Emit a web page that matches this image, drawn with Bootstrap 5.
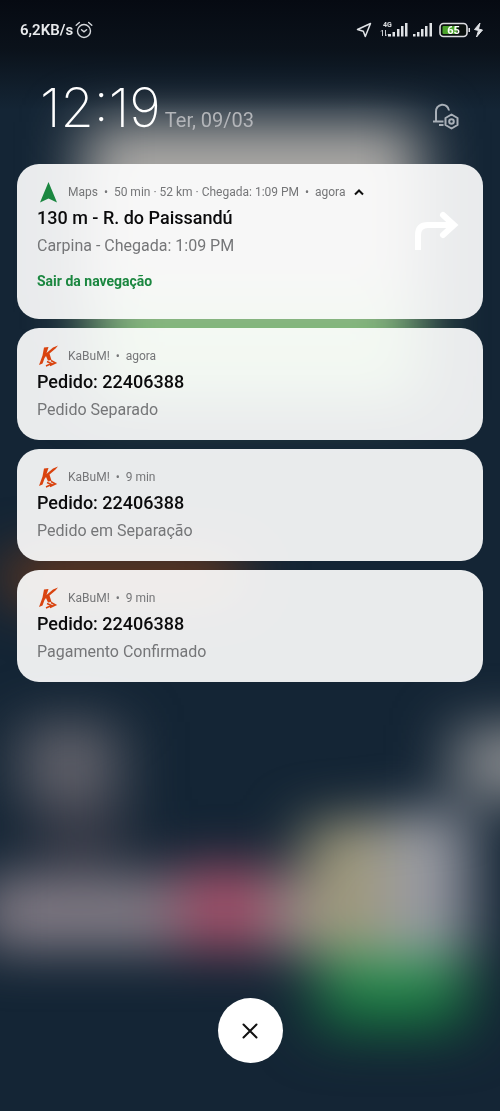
<!DOCTYPE html>
<html lang="pt-BR">
<head>
<meta charset="utf-8">
<meta name="viewport" content="width=device-width, initial-scale=1">
<title>Notificações</title>
<link href="https://cdn.jsdelivr.net/npm/bootstrap@5.3.0/dist/css/bootstrap.min.css" rel="stylesheet">
<style>
  body { font-family: Roboto, "Noto Sans", sans-serif; background: #142434; }
  .wallpaper { position: fixed; inset: 0; width: 100%; height: 100%; z-index: -1; }
  .status-bar { padding: 20px 16px 0 20px; font-size: 15px; line-height: 20px; font-weight: 600; color: #e9ebed; }
  .status-left { gap: 2px; }
  .shade-head { padding: 30px 40px 26px 40px; height: 124px; }
  .clock { font-family: Inter, Roboto, sans-serif; font-weight: 200; font-size: 54px; line-height: 60px; color: #fff; }
  .day { font-size: 20px; line-height: 24px; color: #b3b5b9; }
  .notices { padding: 0 17px; gap: 9px; }
  .notice { background: rgba(255,255,255,.91); border-radius: 22px; padding: 16px 20px; }
  .notice-open { padding-bottom: 24px; }
  .meta { font-size: 12px; line-height: 24px; color: #757678; gap: 9px; }
  .meta > svg { width: 22px; height: 24px; }
  .title { font-size: 18px; line-height: 28px; font-weight: 500; color: #0b0b0c; }
  .detail { font-size: 16px; line-height: 28px; color: #757678; }
  .leave { font-size: 14px; line-height: 28px; font-weight: 700; color: #1b8740; margin-top: 7px; }
  .close-all { width: 65px; height: 65px; background: #fff; }
  .close-all:hover { background: #eee; }
  .shade-foot { padding-bottom: 48px; }
</style>
</head>
<body>
<svg class="wallpaper" viewBox="0 0 500 1111" preserveAspectRatio="none" aria-hidden="true">
  <defs>
    <filter id="soft" filterUnits="userSpaceOnUse" x="-150" y="0" width="800" height="1200" color-interpolation-filters="sRGB"><feGaussianBlur stdDeviation="30 26"/></filter>
    <linearGradient id="top" x2="0" y2="1"><stop offset="0" stop-color="#060a12"/><stop offset=".45" stop-color="#080d14" stop-opacity=".8"/><stop offset="1" stop-color="#0a1018" stop-opacity="0"/></linearGradient>
    <linearGradient id="leaf" x2="0" y2="1"><stop offset="0" stop-color="#4aa468"/><stop offset=".45" stop-color="#208045"/><stop offset="1" stop-color="#105a38"/></linearGradient>
  </defs>
  <rect width="500" height="1111" fill="#142535"/>
  <g filter="url(#soft)">
    <rect x="85" y="122" width="335" height="190" fill="#aaa8a5"/>
    <rect x="95" y="300" width="325" height="100" fill="#7cb875"/>
    <rect x="10" y="556" width="230" height="44" fill="#7a3c18"/>
    <rect x="22" y="722" width="96" height="82" fill="#62626b"/>
    <rect x="36" y="804" width="90" height="66" fill="#353845"/>
    <rect x="-20" y="876" width="200" height="74" fill="#827b85"/>
    <rect x="180" y="866" width="92" height="84" fill="#a04c67"/>
    <rect x="268" y="876" width="46" height="76" fill="#8f878b"/>
    <rect x="306" y="820" width="84" height="133" fill="#a09a7c"/>
    <rect x="386" y="812" width="84" height="141" fill="#999ba4"/>
    <rect x="455" y="725" width="130" height="75" fill="#85888c"/>
    <rect x="318" y="953" width="148" height="82" fill="url(#leaf)"/>
  </g>
  <rect width="500" height="110" fill="url(#top)"/>
</svg>

<div class="d-flex flex-column min-vh-100">
  <div class="status-bar d-flex justify-content-between align-items-center">
    <div class="status-left d-flex align-items-center">
      <span>6,2KB/s</span>
      <svg width="18" height="18" viewBox="0 0 18 18" fill="none" stroke="#d5d8dc" stroke-width="1.4" stroke-linecap="round" role="img" aria-label="Alarme"><circle cx="9" cy="10" r="6.5"/><path d="M1.2 4.2 4.4 1.5M16.8 4.2 13.6 1.5M6.5 8.7 9 10.8l2.6-2"/></svg>
    </div>
    <svg width="128" height="20" viewBox="0 0 128 20" role="img" aria-label="Sinal e bateria">
      <path d="M1.500 9.500 14.500 3.500 9.300 16.500 7.300 11.300Z" fill="none" stroke="#dfe2e5" stroke-width="1.500" stroke-linejoin="round"/>
      <text x="27" y="7" font-size="7" font-weight="700" fill="#dfe2e5">4G</text>
      <path d="M26.500 16v-6m-1.500 1.500 1.500-1.500M29.500 10v6m1.500-1.500-1.500 1.500" stroke="#c6cacf" fill="none"/>
      <g fill="#dfe2e5"><path d="M32 14h3v2.500h-3zM36.500 12h2.500v4.500h-2.500zM41 9h2.500v7.500H41zM45 6h2.500v10.500H45zM49 3h2.500v13.500H49z"/><path d="M57 14h2.500v2.500H57zM61 12h2.500v4.500H61zM65 9h2.500v7.500H65zM69 6h2.500v10.500H69zM73.500 3H76v13.500h-2.500z"/></g>
      <rect x="84" y="3.500" width="27" height="13" rx="3.500" fill="#0a100e" stroke="#dcdce1" stroke-width="1.600"/>
      <rect x="86.500" y="6" width="14.500" height="8" rx="1" fill="#4ba32c"/>
      <path d="M112.500 8h1.500v4h-1.500z" fill="#dcdce1"/>
      <text x="97.500" y="14" font-size="11" font-weight="700" text-anchor="middle" fill="#fff">65</text>
      <path d="M124 3 118.500 9.500 122.500 10.500 120.500 17 126.500 10 122.500 9Z" fill="#dfe2e5" stroke="#dfe2e5"/>
    </svg>
  </div>

  <header class="shade-head d-flex justify-content-between align-items-end">
    <div class="d-flex align-items-baseline gap-1">
      <time class="clock">12:19</time>
      <span class="day">Ter, 09/03</span>
    </div>
    <button type="button" class="btn p-0 border-0 d-flex mb-2" aria-label="Configurar notificações">
      <svg width="28" height="28" viewBox="0 0 28 28" fill="none" stroke="#a9b0b8" stroke-width="2"><path d="M1 19.500H11.500M4 19.500V10a6.500 6.500 0 0 1 13-1.500M7 23h4.500"/><path d="M19.500 12.500 25.500 16v7l-6 3.500-6-3.500v-7z" stroke-linejoin="round"/><circle cx="19.500" cy="19.500" r="2.300"/></svg>
    </button>
  </header>

  <main class="notices d-flex flex-column">
    <article class="notice notice-open d-flex justify-content-between">
      <div>
        <div class="meta d-flex align-items-center">
          <svg viewBox="0 0 22 24" aria-hidden="true"><path d="M11.500 2 20 22.500 11.500 18.500 3 22.500Z" fill="#1b8740"/></svg>
          <span>Maps &nbsp;•&nbsp; 50 min · 52 km · Chegada: 1:09 PM &nbsp;•&nbsp; agora</span>
          <button type="button" class="btn p-0 border-0 d-flex" aria-label="Recolher"><svg width="10" height="8" viewBox="0 0 10 8" fill="none" stroke="#111" stroke-width="2"><path d="M1 6.500 5 2.500 9 6.500"/></svg></button>
        </div>
        <div class="title">130 m - R. do Paissandú</div>
        <div class="detail">Carpina - Chegada: 1:09 PM</div>
        <button type="button" class="leave btn p-0 border-0 d-block">Sair da navegação</button>
      </div>
      <svg class="mt-4 flex-shrink-0 me-1" width="46" height="50" viewBox="0 0 46 50" fill="none" stroke="#fff" stroke-width="6" role="img" aria-label="Vire à direita"><path d="M5 46V31q0-10 10-10H39"/><path d="M30 11 41 21 30 31" stroke-linecap="round"/></svg>
    </article>

    <article class="notice">
      <div class="meta d-flex align-items-center"><svg viewBox="0 0 22 24" aria-hidden="true"><use href="#kabum"/></svg><span>KaBuM! &nbsp;•&nbsp; agora</span></div>
      <div class="title">Pedido: 22406388</div>
      <div class="detail">Pedido Separado</div>
    </article>
    <article class="notice">
      <div class="meta d-flex align-items-center"><svg viewBox="0 0 22 24" aria-hidden="true"><use href="#kabum"/></svg><span>KaBuM! &nbsp;•&nbsp; 9 min</span></div>
      <div class="title">Pedido: 22406388</div>
      <div class="detail">Pedido em Separação</div>
    </article>
    <article class="notice">
      <div class="meta d-flex align-items-center"><svg viewBox="0 0 22 24" aria-hidden="true"><use href="#kabum"/></svg><span>KaBuM! &nbsp;•&nbsp; 9 min</span></div>
      <div class="title">Pedido: 22406388</div>
      <div class="detail">Pagamento Confirmado</div>
    </article>
  </main>

  <footer class="shade-foot mt-auto d-flex justify-content-center">
    <button type="button" class="close-all btn rounded-circle p-0 border-0 d-flex align-items-center justify-content-center" aria-label="Limpar tudo">
      <svg width="18" height="18" viewBox="0 0 18 18" stroke="#111" stroke-width="2" stroke-linecap="round"><path d="M2.500 2.500 15.500 15.500M15.500 2.500 2.500 15.500"/></svg>
    </button>
  </footer>
</div>

<svg width="0" height="0" class="position-absolute" aria-hidden="true">
  <symbol id="kabum" viewBox="0 0 22 24">
    <path d="M7 3.500 11.500 3 9.500 9 16 3.500 21 1.500 18.500 4.500 12.500 9.500 14.500 16 11 16.500 9 12 7.500 14 5.500 19.500 2 21 5.500 11.500Z" fill="#d9430f"/>
    <path d="M10 17.500 14.500 19.500 9 22M14 16.500 18.500 19 13 21.500" fill="none" stroke="#d9430f" stroke-width="1.500"/>
  </symbol>
</svg>
<script src="https://cdn.jsdelivr.net/npm/bootstrap@5.3.0/dist/js/bootstrap.bundle.min.js"></script>
</body>
</html>
